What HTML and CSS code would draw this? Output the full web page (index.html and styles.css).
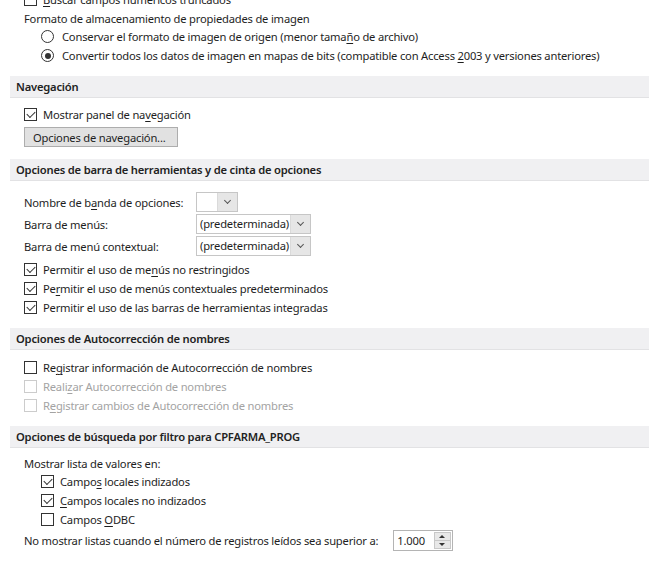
FILE: index.html
```html
<!DOCTYPE html>
<html lang="es">
<head>
<meta charset="utf-8">
<link rel="stylesheet" href="styles.css">
</head>
<body>
<div class="page">
  <div class="block first">
    <div class="row cb-row"><span class="cb"></span><span><u>B</u>uscar campos numéricos truncados</span></div>
    <div class="row label-row f18">Formato de almacenamiento de propiedades de imagen</div>
    <div class="indent">
      <div class="row rb-row"><span class="rb"></span><span>Conservar el formato de imagen de origen (menor tama<u>ñ</u>o de archivo)</span></div>
      <div class="row rb-row"><span class="rb on"></span><span>Convertir todos los datos de imagen en mapas de bits (compatible con Access <u>2</u>003 y versiones anteriores)</span></div>
    </div>
  </div>

  <div class="section-header h1">Navegación</div>
  <div class="block b-nav">
    <div class="row cb-row"><span class="cb on"></span><span>Mostrar panel de na<u>v</u>egación</span></div>
    <button class="btn">Opciones de navegación...</button>
  </div>

  <div class="section-header h2">Opciones de barra de herramientas y de cinta de opciones</div>
  <div class="block b-bar">
    <div class="form-row"><span>Nombre de b<u>a</u>nda de opciones:</span><span class="combo small"><span class="combo-text"></span><span class="combo-btn"></span></span></div>
    <div class="form-row"><span>Barra de menús:</span><span class="combo"><span class="combo-text">(predeterminada)</span><span class="combo-btn"></span></span></div>
    <div class="form-row"><span>Barra de menú contextual:</span><span class="combo"><span class="combo-text">(predeterminada)</span><span class="combo-btn"></span></span></div>
    <div class="row cb-row"><span class="cb on"></span><span>Permitir el uso de me<u>n</u>ús no restringidos</span></div>
    <div class="row cb-row"><span class="cb on"></span><span>Pe<u>r</u>mitir el uso de menús contextuales predeterminados</span></div>
    <div class="row cb-row"><span class="cb on"></span><span>Permitir el uso de las barras de herramientas integradas</span></div>
  </div>

  <div class="section-header h3">Opciones de Autocorrección de nombres</div>
  <div class="block b-auto">
    <div class="row cb-row"><span class="cb"></span><span>Re<u>g</u>istrar información de Autocorrección de nombres</span></div>
    <div class="row cb-row disabled"><span class="cb"></span><span>Reali<u>z</u>ar Autocorrección de nombres</span></div>
    <div class="row cb-row disabled"><span class="cb"></span><span>R<u>e</u>gistrar cambios de Autocorrección de nombres</span></div>
  </div>

  <div class="section-header h4">Opciones de búsqueda por filtro para CPFARMA_PROG</div>
  <div class="block b-filter">
    <div class="row label-row f17">Mostrar lista de valores en:</div>
    <div class="indent">
      <div class="row cb-row"><span class="cb on"></span><span>Campo<u>s</u> locales indizados</span></div>
      <div class="row cb-row"><span class="cb on"></span><span><u>C</u>ampos locales no indizados</span></div>
      <div class="row cb-row"><span class="cb"></span><span>Campos <u>O</u>DBC</span></div>
    </div>
    <div class="row spin-row"><span>No mostrar listas cuando el número de registros leídos sea superior a:</span>
      <span class="spin"><span class="spin-text">1.000</span><span class="spin-btns"><span class="up"></span><span class="down"></span></span></span>
    </div>
  </div>
</div>
</body>
</html>
```
FILE: styles.css
```css
html, body {
  margin: 0;
  padding: 0;
  background: #ffffff;
}
body {
  font-family: "Noto Sans", "Open Sans", sans-serif;
  font-size: 11.2px;
  letter-spacing: -0.2px;
  color: #1e1e1e;
  overflow: hidden;
  width: 656px;
  height: 565px;
}
u {
  text-decoration: underline;
  text-underline-offset: 2px;
  text-decoration-thickness: 1px;
}
.page {
  display: flex;
  flex-direction: column;
}
.block {
  padding-left: 24px;
  display: flex;
  flex-direction: column;
  align-items: flex-start;
}
.first { margin-top: -10px; }
.indent { padding-left: 17px; display: flex; flex-direction: column; }
.row {
  display: flex;
  align-items: center;
  white-space: nowrap;
}
.cb-row, .rb-row { height: 19px; }
.cb-row { gap: 6px; }
.rb-row { gap: 8px; }
.f18 { height: 18px; }
.f17 { height: 17px; }

.cb {
  width: 11px;
  height: 11px;
  border: 1px solid #333333;
  background: #fff;
  position: relative;
  flex: none;
}
.cb.on::after {
  content: "";
  position: absolute;
  left: 2px;
  top: 0px;
  width: 7px;
  height: 4px;
  border-left: 1px solid #333;
  border-bottom: 1px solid #333;
  transform: translate(0, 2px) rotate(-45deg);
  transform-origin: center;
}
.disabled { color: #a3a3a3; }
.disabled .cb { border-color: #cccccc; }

.rb {
  width: 11px;
  height: 11px;
  border: 1px solid #333;
  border-radius: 50%;
  background: #fff;
  position: relative;
  flex: none;
}
.rb.on::after {
  content: "";
  position: absolute;
  left: 2.5px;
  top: 2.5px;
  width: 6px;
  height: 6px;
  border-radius: 50%;
  background: #333;
}

.section-header {
  margin: 0 7px 0 10px;
  height: 21px;
  line-height: 21px;
  padding-left: 6px;
  background: #f0f0f2;
  border-bottom: 1px solid #e2e2e4;
  font-weight: 600;
  color: #222;
  white-space: nowrap;
}
.h1 { margin-top: 11px; }
.h2 { margin-top: 12px; }
.h3 { margin-top: 11px; }
.h4 { margin-top: 11px; }

.b-nav { margin-top: 7px; }
.btn {
  margin-top: 3px;
  height: 20px;
  width: 154px;
  padding: 0 0 0 8px;
  text-align: left;
  font: inherit;
  letter-spacing: inherit;
  color: #1e1e1e;
  background: #e1e1e1;
  border: 1px solid #adadad;
  border-radius: 0;
}

.b-bar { margin-top: 10px; }
.form-row {
  display: grid;
  grid-template-columns: 172px auto;
  align-items: center;
  height: 22px;
  white-space: nowrap;
}
.combo {
  display: flex;
  height: 20px;
  border: 1px solid #c6c6c6;
  box-sizing: border-box;
  background: #fff;
}
.combo-text {
  width: 93px;
  padding-left: 3px;
  line-height: 18px;
  box-sizing: border-box;
  overflow: hidden;
}
.combo.small .combo-text { width: 20px; }
.combo-btn {
  width: 19px;
  background: #e6e6e6;
  border-left: 1px solid #dadada;
  position: relative;
}
.combo-btn::after {
  content: "";
  position: absolute;
  left: 7px;
  top: 5px;
  width: 4px;
  height: 4px;
  border-right: 1px solid #555;
  border-bottom: 1px solid #555;
  transform: rotate(45deg);
}
.b-bar .form-row + .cb-row { margin-top: 3px; }

.b-auto { margin-top: 8px; }
.b-filter { margin-top: 7px; }

.spin-row { height: 22px; gap: 5px; }
.spin {
  display: flex;
  width: 60px;
  height: 21px;
  box-sizing: border-box;
  border: 1px solid #b4b4b4;
  background: #fff;
  margin-left: 10px;
}
.spin-text {
  flex: 1;
  padding-left: 3px;
  line-height: 19px;
}
.spin-btns {
  width: 15px;
  margin: 1px 1px 1px 0;
  display: flex;
  flex-direction: column;
  border: 1px solid #c8c8c8;
  background: #e8e8e8;
}
.spin-btns span {
  flex: 1;
  position: relative;
}
.spin-btns .up { border-bottom: 1px solid #c8c8c8; }
.spin-btns .up::after,
.spin-btns .down::after {
  content: "";
  position: absolute;
  left: 4px;
  width: 0;
  height: 0;
  border-left: 3px solid transparent;
  border-right: 3px solid transparent;
}
.spin-btns .up::after { top: 2px; border-bottom: 3px solid #333; }
.spin-btns .down::after { top: 2px; border-top: 3px solid #333; }
```
